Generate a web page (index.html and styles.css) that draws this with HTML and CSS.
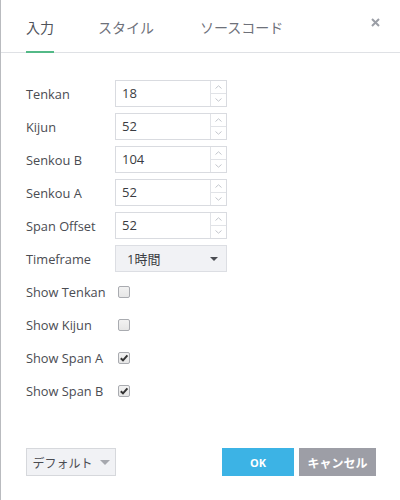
FILE: index.html
```html
<!DOCTYPE html>
<html lang="ja">
<head>
<meta charset="utf-8">
<link rel="stylesheet" href="styles.css">
</head>
<body>
<div class="dialog">
  <div class="tabs">
    <div class="tab active">入力</div>
    <div class="tab second">スタイル</div>
    <div class="tab">ソースコード</div>
    <div class="close">
      <svg width="9" height="9" viewBox="0 0 9 9"><path d="M1 1L8 8M8 1L1 8" stroke="#9b9ea6" stroke-width="2"/></svg>
    </div>
  </div>
  <div class="form">
    <div class="row"><span class="label">Tenkan</span><div class="num"><span class="val">18</span><div class="spin"><span class="up"><svg width="7" height="4" viewBox="0 0 7 4"><path d="M0.5 3.5L3.5 0.8L6.5 3.5" fill="none" stroke="#c3c6cc" stroke-width="1"/></svg></span><span class="down"><svg width="7" height="4" viewBox="0 0 7 4"><path d="M0.5 0.5L3.5 3.2L6.5 0.5" fill="none" stroke="#c3c6cc" stroke-width="1"/></svg></span></div></div></div>
    <div class="row"><span class="label">Kijun</span><div class="num"><span class="val">52</span><div class="spin"><span class="up"><svg width="7" height="4" viewBox="0 0 7 4"><path d="M0.5 3.5L3.5 0.8L6.5 3.5" fill="none" stroke="#c3c6cc" stroke-width="1"/></svg></span><span class="down"><svg width="7" height="4" viewBox="0 0 7 4"><path d="M0.5 0.5L3.5 3.2L6.5 0.5" fill="none" stroke="#c3c6cc" stroke-width="1"/></svg></span></div></div></div>
    <div class="row"><span class="label">Senkou B</span><div class="num"><span class="val">104</span><div class="spin"><span class="up"><svg width="7" height="4" viewBox="0 0 7 4"><path d="M0.5 3.5L3.5 0.8L6.5 3.5" fill="none" stroke="#c3c6cc" stroke-width="1"/></svg></span><span class="down"><svg width="7" height="4" viewBox="0 0 7 4"><path d="M0.5 0.5L3.5 3.2L6.5 0.5" fill="none" stroke="#c3c6cc" stroke-width="1"/></svg></span></div></div></div>
    <div class="row"><span class="label">Senkou A</span><div class="num"><span class="val">52</span><div class="spin"><span class="up"><svg width="7" height="4" viewBox="0 0 7 4"><path d="M0.5 3.5L3.5 0.8L6.5 3.5" fill="none" stroke="#c3c6cc" stroke-width="1"/></svg></span><span class="down"><svg width="7" height="4" viewBox="0 0 7 4"><path d="M0.5 0.5L3.5 3.2L6.5 0.5" fill="none" stroke="#c3c6cc" stroke-width="1"/></svg></span></div></div></div>
    <div class="row"><span class="label">Span Offset</span><div class="num"><span class="val">52</span><div class="spin"><span class="up"><svg width="7" height="4" viewBox="0 0 7 4"><path d="M0.5 3.5L3.5 0.8L6.5 3.5" fill="none" stroke="#c3c6cc" stroke-width="1"/></svg></span><span class="down"><svg width="7" height="4" viewBox="0 0 7 4"><path d="M0.5 0.5L3.5 3.2L6.5 0.5" fill="none" stroke="#c3c6cc" stroke-width="1"/></svg></span></div></div></div>
    <div class="row"><span class="label">Timeframe</span><div class="select"><span class="sval">1時間</span><span class="caret"></span></div></div>
    <div class="row"><span class="label">Show Tenkan</span><span class="check"></span></div>
    <div class="row"><span class="label">Show Kijun</span><span class="check"></span></div>
    <div class="row"><span class="label">Show Span A</span><span class="check"><svg width="10" height="10" viewBox="0 0 10 10"><path d="M1.8 5.2L4 7.4L8.4 2.4" fill="none" stroke="#333" stroke-width="2"/></svg></span></div>
    <div class="row"><span class="label">Show Span B</span><span class="check"><svg width="10" height="10" viewBox="0 0 10 10"><path d="M1.8 5.2L4 7.4L8.4 2.4" fill="none" stroke="#333" stroke-width="2"/></svg></span></div>
  </div>
  <div class="footer">
    <div class="default">デフォルト<span class="caret small"></span></div>
    <div class="actions">
      <div class="btn ok">OK</div>
      <div class="btn cancel">キャンセル</div>
    </div>
  </div>
</div>
</body>
</html>
```
FILE: styles.css
```css
html, body {
  margin: 0;
  padding: 0;
  background: #fff;
}
.dialog {
  width: 399px;
  height: 500px;
  border-left: 1px solid #b9bbbf;
  display: flex;
  flex-direction: column;
  font-family: "Open Sans", "Noto Sans CJK JP", sans-serif;
  color: #4a4c52;
  box-sizing: content-box;
}
.tabs {
  display: flex;
  align-items: flex-end;
  height: 52px;
  border-bottom: 1px solid #dfe1e5;
  padding-left: 25px;
  position: relative;
}
.tab {
  font-family: "Noto Sans CJK JP", sans-serif;
  font-size: 14px;
  color: #6e717a;
  height: 51px;
  line-height: 50px;
  margin-right: 44px;
  border-bottom: 2px solid transparent;
  margin-bottom: -1px;
  box-sizing: border-box;
}
.tab.second {
  margin-right: 46px;
}
.tab.active {
  color: #50535b;
  border-bottom-color: #53b987;
}
.close {
  position: absolute;
  right: 20px;
  top: 18px;
  width: 9px;
  height: 9px;
  display: flex;
}
.form {
  display: flex;
  flex-direction: column;
  gap: 6px;
  padding: 27px 0 0 25px;
}
.row {
  display: flex;
  align-items: center;
  height: 27px;
}
.label {
  width: 89px;
  font-size: 12.8px;
  color: #4a4c52;
}
.num {
  width: 112px;
  height: 27px;
  box-sizing: border-box;
  border: 1px solid #d9dbe0;
  display: flex;
}
.val {
  flex: 1;
  font-size: 13px;
  line-height: 25px;
  padding-left: 6px;
  color: #3a3c42;
}
.spin {
  width: 15px;
  border-left: 1px solid #e1e3e7;
  display: flex;
  flex-direction: column;
}
.spin span {
  flex: 1;
  display: flex;
  align-items: center;
  justify-content: center;
}
.spin .up {
  border-bottom: 1px solid #e1e3e7;
}
.select {
  width: 112px;
  height: 27px;
  box-sizing: border-box;
  border: 1px solid #dcdee3;
  background: #f1f2f5;
  display: flex;
  align-items: center;
  justify-content: space-between;
  padding: 0 8px 0 11px;
}
.sval {
  font-family: "Open Sans", "Noto Sans CJK JP", sans-serif;
  font-size: 13px;
  color: #3a3c42;
}
.caret {
  width: 0;
  height: 0;
  border-left: 4px solid transparent;
  border-right: 4px solid transparent;
  border-top: 4px solid #4a4c52;
}
.caret.small {
  border-left-width: 5px;
  border-right-width: 5px;
  border-top: 5px solid #a6a8ae;
  margin-left: 7px;
}
.check {
  width: 12px;
  height: 12px;
  box-sizing: border-box;
  border: 1px solid #a9abb0;
  border-radius: 2px;
  background: linear-gradient(#f2f2f2, #e6e6e6);
  margin-left: 3px;
  display: flex;
  align-items: center;
  justify-content: center;
}
.footer {
  margin-top: auto;
  margin-bottom: 24px;
  display: flex;
  justify-content: space-between;
  align-items: center;
  padding: 0 24px 0 25px;
}
.default {
  width: 90px;
  height: 28px;
  box-sizing: border-box;
  border: 1px solid #d6d8dc;
  background: #f1f2f5;
  display: flex;
  align-items: center;
  justify-content: center;
  font-family: "Noto Sans CJK JP", sans-serif;
  font-size: 12px;
  color: #4a4c52;
}
.actions {
  display: flex;
  gap: 5px;
}
.btn {
  height: 28px;
  display: flex;
  align-items: center;
  justify-content: center;
  color: #fff;
  font-weight: bold;
  font-size: 11px;
  font-family: "Open Sans", "Noto Sans CJK JP", sans-serif;
}
.btn.ok {
  width: 72px;
  background: #3cb3e5;
}
.btn.cancel {
  width: 77px;
  background: #9d9ea6;
  font-family: "Noto Sans CJK JP", sans-serif;
  font-size: 12px;
}
```
